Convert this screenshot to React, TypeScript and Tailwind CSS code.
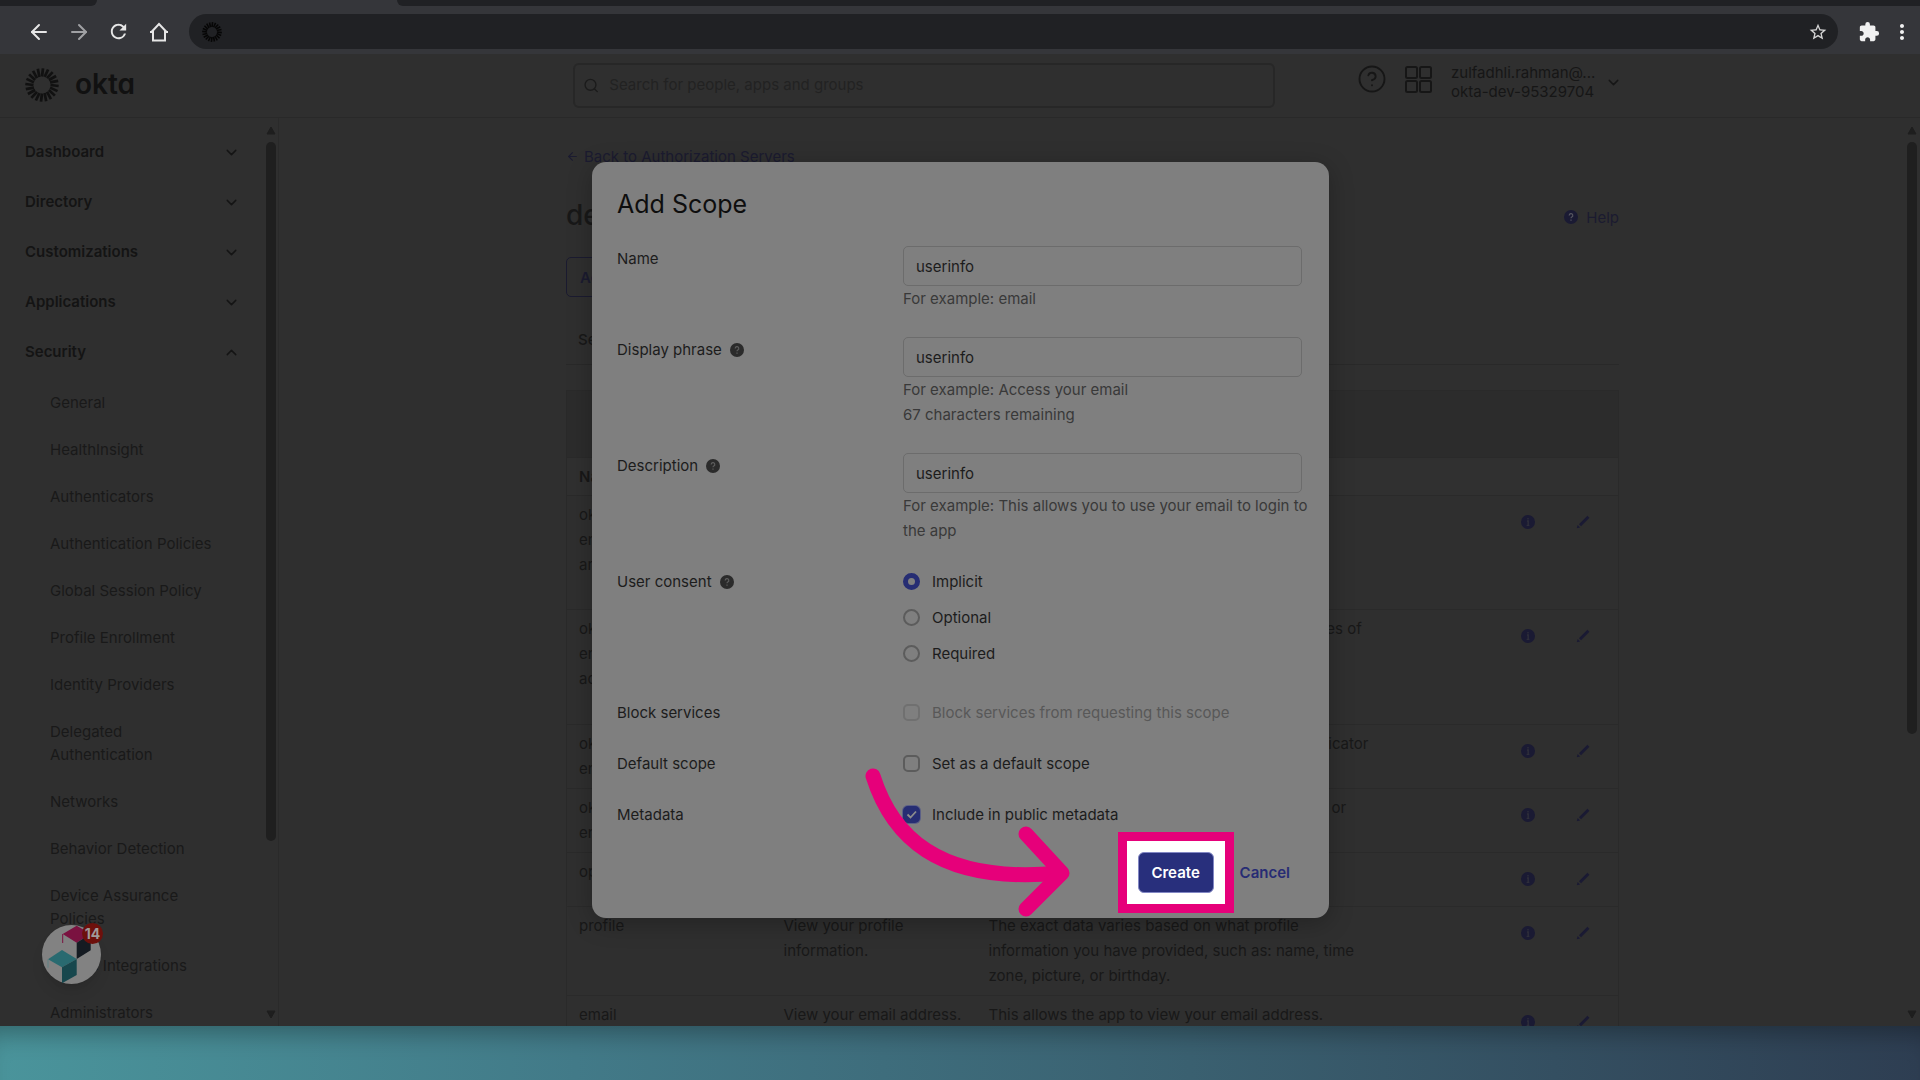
import { ArrowLeft, ArrowRight, ChevronDown, ChevronUp, CircleHelp, Search } from 'lucide-react';
import { MdExtension, MdMoreVert, MdRefresh, MdStarBorder } from 'react-icons/md';

const NAV = ['Dashboard', 'Directory', 'Customizations', 'Applications', 'Security'];

const SECURITY_NAV = [
  'General',
  'HealthInsight',
  'Authenticators',
  'Authentication Policies',
  'Global Session Policy',
  'Profile Enrollment',
  'Identity Providers',
  'Delegated Authentication',
  'Networks',
  'Behavior Detection',
  'Device Assurance Policies',
  'Device Integrations',
  'Administrators',
];

const SCOPES = [
  {
    name: ['okta.', 'enduser.', 'area.read'],
    phrase: 'View your account',
    description: 'Allows the app to read your account.',
    height: 'h-[114px]',
  },
  {
    name: ['okta.', 'enduser.', 'access.edit'],
    phrase: 'Manage your account',
    description: 'This allows the app to view and manage attributes of your account.',
    height: 'h-[115px]',
  },
  {
    name: ['okta.', 'enduser.email'],
    phrase: 'Manage your email',
    description: 'Allows the end user to manage an email authenticator for sign in.',
    height: 'h-[64px]',
  },
  {
    name: ['okta.', 'enduser.phone'],
    phrase: 'Manage your phone',
    description: 'Allows the end user to manage a phone number or authenticator.',
    height: 'h-[64px]',
  },
  {
    name: ['openid'],
    phrase: 'Sign you in',
    description: 'Signals an OpenID request.',
    height: 'h-[54px]',
  },
  {
    name: ['profile'],
    phrase: 'View your profile information.',
    description:
      'The exact data varies based on what profile information you have provided, such as: name, time zone, picture, or birthday.',
    height: 'h-[89px]',
  },
  {
    name: ['email'],
    phrase: 'View your email address.',
    description: 'This allows the app to view your email address.',
    height: 'h-[54px]',
  },
];

const inputCls =
  'h-10 w-full rounded-[5px] border border-[#6c6c6c] bg-transparent px-3 text-[15px] text-[#1c1c1c] outline-none';

function Sunburst({ size, color }: { size: number; color: string }) {
  return (
    <svg width={size} height={size} viewBox="-50 -50 100 100" className="shrink-0" aria-hidden>
      {Array.from({ length: 20 }).map((_, i) => (
        <line
          key={i}
          x1="0"
          y1="-25"
          x2="3"
          y2="-49"
          stroke={color}
          strokeWidth="8"
          transform={`rotate(${i * 18})`}
        />
      ))}
    </svg>
  );
}

function HelpDot({ className }: { className: string }) {
  return (
    <svg width="14" height="14" viewBox="0 0 14 14" className={className} aria-hidden>
      <circle cx="7" cy="7" r="7" fill="currentColor" />
      <path
        d="M5.2 5.4a1.8 1.8 0 1 1 2.6 1.6c-.6.3-.8.6-.8 1.2M7 9.6v1.2"
        fill="none"
        stroke="#7f7f7f"
        strokeWidth="1.2"
        className="opacity-60"
      />
    </svg>
  );
}

function InfoDot() {
  return (
    <svg width="14" height="14" viewBox="0 0 14 14" aria-hidden>
      <circle cx="7" cy="7" r="7" fill="#1a1a33" />
      <path d="M7 3v1.6M6 6h1.2v4M5.6 10.4h2.8" stroke="#2e2e3a" strokeWidth="1.4" fill="none" />
    </svg>
  );
}

function Pencil() {
  return (
    <svg width="14" height="14" viewBox="0 0 14 14" aria-hidden>
      <path d="M12.4 1.8 4 10.2" stroke="#1a1a33" strokeWidth="3" />
      <path d="M.8 13.2 1.6 9.9l2.5 2.5z" fill="#1a1a33" />
    </svg>
  );
}

function Scrollbar({ thumb }: { thumb: string }) {
  return (
    <div className="flex h-full w-[10px] flex-col items-center pb-[6px] pt-[7px]" aria-hidden>
      <svg width="10" height="10" viewBox="0 0 10 10" className="shrink-0">
        <path d="M5 2 9 9H1z" fill="#1e1e1e" stroke="#1e1e1e" strokeLinejoin="round" />
      </svg>
      <div className="min-h-0 w-full flex-1 pt-[7px]">
        <div className={`w-full rounded-full bg-[#1f1f1f] ${thumb}`} />
      </div>
      <svg width="10" height="10" viewBox="0 0 10 10" className="shrink-0">
        <path d="M5 8 9 1H1z" fill="#1e1e1e" stroke="#1e1e1e" strokeLinejoin="round" />
      </svg>
    </div>
  );
}

function BrowserBar() {
  return (
    <div className="shrink-0 bg-[#35363a]">
      <div className="flex h-[6px]">
        <div className="w-[97px] rounded-br-lg bg-[#202124]" />
        <div className="w-[300px]" />
        <div className="flex-1 rounded-bl-lg bg-[#202124]" />
      </div>
      <div className="flex h-12 items-center pl-[27px] pr-[6px] pt-[3px]">
        <div className="flex w-[162px] items-center gap-4 text-[#e6e6e6]">
          <button aria-label="Back"><ArrowLeft size={24} strokeWidth={2} /></button>
          <button aria-label="Forward" className="text-[#a0a1a4]"><ArrowRight size={24} strokeWidth={2} /></button>
          <button aria-label="Reload"><MdRefresh size={23} /></button>
          <button aria-label="Home" className="pl-[2px]">
            <svg width="22" height="24" viewBox="0 0 22 24" fill="none" stroke="currentColor" strokeWidth="2">
              <path d="M3 12.500 11 4l8 8.500M2 12h3v8.500h12V12h3" />
            </svg>
          </button>
        </div>
        <div className="flex h-[35px] flex-1 items-center justify-between rounded-full bg-[#202124] pl-[13px] pr-[10px]">
          <Sunburst size={20} color="#060606" />
          <MdStarBorder size={20} color="#d5d5d5" />
        </div>
        <div className="flex items-center gap-[10px] pl-5 text-[#f1f1f1]">
          <MdExtension size={22} />
          <MdMoreVert size={24} />
        </div>
      </div>
    </div>
  );
}

function Header() {
  return (
    <header className="flex h-[64px] shrink-0 items-start border-b border-[#292929]">
      <a href="#" className="flex w-[573px] items-center gap-4 pl-[25px] pt-[14px] text-[#111111]">
        <Sunburst size={34} color="#111111" />
        <span className="pb-[2px] text-[28px] font-semibold leading-8 [font-feature-settings:'cv11']">okta</span>
      </a>
      <label className="mt-[9px] flex h-[45px] w-[702px] items-center gap-[10px] rounded-md border-2 border-[#272727] pl-[8px]">
        <Search size={17} strokeWidth={2} className="text-[#1b1b1b]" />
        <input
          type="text"
          aria-label="Search"
          placeholder="Search for people, apps and groups"
          className="w-full bg-transparent text-[15px] placeholder:text-[#222222] outline-none"
        />
      </label>
      <div className="flex items-start pl-[82px] text-[#161616]">
        <CircleHelp size={30} strokeWidth={1.5} className="mt-[10px]" />
        <svg width="27" height="27" viewBox="0 0 27 27" fill="none" stroke="currentColor" strokeWidth="2" className="ml-[18px] mt-3">
          <rect x="1" y="1" width="11" height="11" rx="1.5" />
          <rect x="15" y="1" width="11" height="11" rx="1.5" />
          <rect x="1" y="15" width="11" height="11" rx="1.5" />
          <rect x="15" y="15" width="11" height="11" rx="1.5" />
        </svg>
        <button className="ml-[19px] mt-[9px] flex items-center gap-[10px] text-left text-[15px] leading-[19px]">
          <span>
            zulfadhli.rahman@...
            <br />
            okta-dev-95329704
          </span>
          <ChevronDown size={17} strokeWidth={2} />
        </button>
      </div>
    </header>
  );
}

function Sidebar() {
  return (
    <aside className="flex w-[279px] shrink-0 overflow-hidden border-r border-[#2a2a2a]">
      <nav className="w-[266px] pl-[25px] pt-[9px] text-[15px]">
        {NAV.map((item) => (
          <button key={item} className="flex h-[50px] w-full items-center justify-between pr-[26px] font-semibold text-[#141414]">
            {item}
            {item === 'Security' ? <ChevronUp size={17} /> : <ChevronDown size={17} />}
          </button>
        ))}
        <ul className="flex flex-col gap-6 pl-[25px] pr-[50px] pt-[14px] leading-[23px] text-[#191919]">
          {SECURITY_NAV.map((item) => (
            <li key={item}>
              <a href="#" className={item.startsWith('Authentication') ? 'whitespace-nowrap' : ''}>{item}</a>
            </li>
          ))}
        </ul>
      </nav>
      <Scrollbar thumb="h-[699px]" />
    </aside>
  );
}

function Content() {
  return (
    <main className="min-w-0 flex-1 overflow-hidden pl-[287px] pr-[288px] pt-[26px] text-[15px] leading-[25px] text-[#181818]">
      <a href="#" className="flex items-center gap-[5px] text-[#1b1b30]">
        <ArrowLeft size={13} strokeWidth={2} />
        Back to Authorization Servers
      </a>
      <div className="mt-[28px] flex items-center justify-between">
        <h1 className="text-[28px] font-medium leading-9">default</h1>
        <a href="#" className="flex items-center gap-2 pt-1 text-[#1b1b30]">
          <HelpDot className="text-[#1a1a33]" />
          Help
        </a>
      </div>
      <button className="mt-[24px] h-10 rounded-[5px] border border-[#1b1b30] px-[13px] font-semibold text-[#1b1b30]">
        Active
      </button>
      <div className="mt-[18px] border-b border-[#292929] px-3 py-[12px] font-medium">Settings</div>
      <table className="mt-[25px] w-full table-fixed border border-[#2a2a2a]">
        <colgroup>
          <col className="w-[205px]" />
          <col className="w-[205px]" />
          <col />
          <col className="w-[55px]" />
          <col className="w-[55px]" />
        </colgroup>
        <thead>
          <tr className="h-[67px] border-b border-[#2a2a2a] bg-[#2c2c2c]">
            <th colSpan={5} />
          </tr>
          <tr className="h-[38px] border-b border-[#2a2a2a] bg-[#303030] text-left">
            <th className="pl-3 font-semibold">Name</th>
            <th className="pl-3 font-semibold">Display phrase</th>
            <th className="pl-3 font-semibold">Description</th>
            <th />
            <th />
          </tr>
        </thead>
        <tbody>
          {SCOPES.map((scope, i) => (
            <tr key={i} className={`border-b border-[#2a2a2a] align-top ${scope.height}`}>
              <td className="pl-3 pt-[6px]">
                {scope.name.map((part) => (
                  <div key={part}>{part}</div>
                ))}
              </td>
              <td className="pl-3 pr-3 pt-[6px]">{scope.phrase}</td>
              <td className="pl-3 pr-[134px] pt-[6px]">{scope.description}</td>
              <td className="pt-[6px]">
                <button aria-label="Info" className="flex h-10 w-10 items-center justify-center"><InfoDot /></button>
              </td>
              <td className="pt-[6px]">
                <button aria-label="Edit" className="flex h-10 w-10 items-center justify-center"><Pencil /></button>
              </td>
            </tr>
          ))}
        </tbody>
      </table>
    </main>
  );
}

function ChatBadge() {
  return (
    <button aria-label="Notifications" className="absolute bottom-[42px] left-[42px] h-[59px] w-[59px] rounded-full bg-[#828282] shadow-lg">
      <svg width="59" height="59" viewBox="0 0 59 59" aria-hidden>
        <path d="M20.7 9 34.7.7l14 8-14 9z" fill="#7a1240" />
        <path d="M20.7 9v9" stroke="#7a1240" />
        <path d="m34.7 17.7 14-9v16.600l-14 8.700z" fill="#151b22" />
        <path d="M6 34.300 20 25l14.700 9L20 42.300z" fill="#296a70" />
        <path d="M6 34.300v8.400" stroke="#5d8083" />
        <path d="m20 42.300 14.700-8.300v16L20 58.300z" fill="#17474d" />
      </svg>
      <span className="absolute -right-[2px] -top-[2px] flex h-[21px] w-[21px] items-center justify-center rounded-full bg-[#6d100c] text-[14px] font-bold text-[#a09a9a]">
        14
      </span>
    </button>
  );
}

function Field({ id, label, help, children }: { id?: string; label: string; help?: boolean; children: React.ReactNode }) {
  return (
    <div className="flex">
      <div className="flex h-[25px] w-[286px] shrink-0 items-center gap-2">
        <label htmlFor={id}>{label}</label>
        {help && <HelpDot className="text-[#2b2b2b]" />}
      </div>
      <div className="min-w-0 flex-1">{children}</div>
    </div>
  );
}

function Check({ id, label, checked, disabled }: { id: string; label: string; checked?: boolean; disabled?: boolean }) {
  return (
    <div className={disabled ? 'flex items-center gap-3 text-[#585858]' : 'flex items-center gap-3'}>
      <span className="relative flex">
        <input
          id={id}
          type="checkbox"
          defaultChecked={checked}
          disabled={disabled}
          className="h-[17px] w-[17px] appearance-none rounded-[5px] border-2 border-[#5c5c5c] checked:border-[#262d73] checked:bg-[#262d73] checked:ring-1 checked:ring-[#5b5f86] disabled:border-[#707070]"
        />
        {checked && (
          <svg width="17" height="17" viewBox="0 0 17 17" className="pointer-events-none absolute inset-0" aria-hidden>
            <path d="m4.500 8.500 3 3 5.500-6" stroke="#8d8d8d" strokeWidth="1.800" fill="none" />
          </svg>
        )}
      </span>
      <label htmlFor={id}>{label}</label>
    </div>
  );
}

function AddScopeDialog() {
  return (
    <form
      role="dialog"
      aria-label="Add Scope"
      className="absolute left-[592px] top-[162px] w-[737px] rounded-[14px] bg-[#7f7f7f] px-[25px] pb-[25px] pt-[25px] text-[15px] leading-[25px] text-[#1c1c1c] shadow-[0_5px_24px_rgba(0,0,0,0.25)]"
    >
      <h2 className="text-[25px] leading-[34px] text-[#0e0e0e]">Add Scope</h2>
      <div className="mt-[25px] flex flex-col gap-[26px] pr-[2px]">
        <Field id="name" label="Name">
          <input id="name" defaultValue="userinfo" className={inputCls} />
          <p className="text-[#393939]">For example: email</p>
        </Field>
        <Field id="phrase" label="Display phrase" help>
          <input id="phrase" defaultValue="userinfo" className={inputCls} />
          <p className="text-[#393939]">For example: Access your email</p>
          <p className="text-[#393939]">67 characters remaining</p>
        </Field>
        <Field id="description" label="Description" help>
          <input id="description" defaultValue="userinfo" className={inputCls} />
          <p className="whitespace-nowrap text-[#393939]">
            For example: This allows you to use your email to login to
            <br />
            the app
          </p>
        </Field>
        <Field label="User consent" help>
          <div className="flex flex-col gap-[11px] pb-2">
            {['Implicit', 'Optional', 'Required'].map((option) => (
              <label key={option} className="flex items-center gap-3">
                <input
                  type="radio"
                  name="consent"
                  defaultChecked={option === 'Implicit'}
                  className="h-[17px] w-[17px] appearance-none rounded-full border-2 border-[#5c5c5c] checked:border-[5px] checked:border-[#262d73]"
                />
                {option}
              </label>
            ))}
          </div>
        </Field>
        <Field id="block" label="Block services">
          <Check id="block" label="Block services from requesting this scope" disabled />
        </Field>
        <Field id="default" label="Default scope">
          <Check id="default" label="Set as a default scope" />
        </Field>
        <Field id="metadata" label="Metadata">
          <Check id="metadata" label="Include in public metadata" checked />
        </Field>
      </div>
      <div className="mt-[25px] flex items-center justify-end gap-[26px] pr-[14px] font-semibold">
        {/* spotlight around the primary action */}
        <div className="relative">
          <div className="absolute -bottom-5 -left-5 -right-5 -top-5 border-[9px] border-[#e6007a] bg-white" />
          <button type="button" className="relative h-[41px] w-[76px] rounded-md border border-[#8287c4] bg-[#282f7c] text-white">
            Create
          </button>
        </div>
        <button type="button" className="text-[#272c74]">Cancel</button>
      </div>
      <svg
        width="220"
        height="180"
        viewBox="860 750 220 180"
        fill="none"
        stroke="#e6007a"
        strokeWidth="15"
        strokeLinecap="round"
        strokeLinejoin="round"
        className="pointer-events-none absolute left-[268px] top-[588px]"
        aria-hidden
      >
        <path d="M873 776C891 833 935 885 1060 873" />
        <path d="M1026 834 1062 873 1026 909" />
      </svg>
    </form>
  );
}

export default function App() {
  return (
    <div className="flex h-screen flex-col overflow-hidden bg-[#2f2f2f] font-['Inter',sans-serif]">
      <BrowserBar />
      <div className="relative flex min-h-0 flex-1 flex-col">
        <Header />
        <div className="flex min-h-0 flex-1">
          <Sidebar />
          <Content />
          <div className="pr-[3px]"><Scrollbar thumb="h-[592px]" /></div>
        </div>
        <ChatBadge />
      </div>
      <div className="h-[54px] shrink-0 bg-[linear-gradient(to_right,#4a949b,#427a88_30%,#3a6070_62%,#2e3e52)] shadow-[inset_0_24px_24px_-16px_rgba(0,0,0,0.3)]" />
      <AddScopeDialog />
    </div>
  );
}
